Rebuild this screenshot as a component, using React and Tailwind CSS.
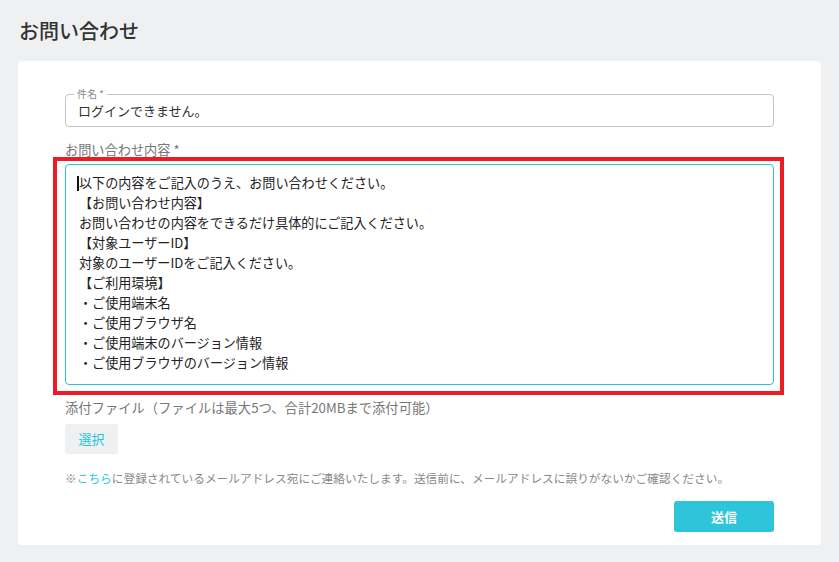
import React from 'react';

const bodyLines = [
  '以下の内容をご記入のうえ、お問い合わせください。',
  '【お問い合わせ内容】',
  'お問い合わせの内容をできるだけ具体的にご記入ください。',
  '【対象ユーザーID】',
  '対象のユーザーIDをご記入ください。',
  '【ご利用環境】',
  '・ご使用端末名',
  '・ご使用ブラウザ名',
  '・ご使用端末のバージョン情報',
  '・ご使用ブラウザのバージョン情報',
];

const App = () => {
  return (
    <div
      className="min-h-[562px] w-full bg-[#eff0f2] px-[18px] pb-[17px] [font-family:'Noto_Sans_CJK_JP','Noto_Sans',sans-serif]"
    >
      <h1 className="pl-[1px] pt-[16px] pb-[16px] text-[20px] leading-[29px] font-medium text-[#333]">
        お問い合わせ
      </h1>

      <div className="rounded-[4px] bg-white px-[47px] pt-[33px] pb-[13px]">
        {/* subject */}
        <div className="relative h-[33px] rounded-[4px] border border-[#c4c4c4]">
          <span className="absolute -top-[8px] left-[8px] bg-white px-[3px] text-[10px] leading-[14px] text-[#888]">
            件名 *
          </span>
          <div className="pl-[12px] pt-[6px] text-[13px] leading-[20px] text-[#333]">
            ログインできません。
          </div>
        </div>

        {/* body */}
        <div className="mt-[13px] text-[13.2px] leading-[20px] text-[#777]">お問い合わせ内容 *</div>
        <div className="relative mt-[4px]">
          <div className="pointer-events-none absolute -top-[7px] -left-[12px] -right-[10px] -bottom-[10px] border-[4px] border-[#ed1c24]" />
          <div className="relative h-[221px] rounded-[4px] border border-[#26c6da] bg-white pl-[13px] pt-[8px] text-[13.1px] leading-[20px] text-[#222]">
            <span className="absolute left-[11px] top-[11px] h-[15px] w-[2px] bg-[#111]" />
            {bodyLines.map((line, i) => (
              <div key={i}>{line}</div>
            ))}
          </div>
        </div>

        {/* attachments */}
        <div className="mt-[13px] text-[13.3px] leading-[20px] text-[#777]">
          添付ファイル（ファイルは最大5つ、合計20MBまで添付可能）
        </div>
        <button className="mt-[6px] flex h-[30px] w-[53px] items-center justify-center rounded-[3px] bg-[#eff0f2] text-[13px] text-[#26c6da]">
          選択
        </button>

        <p className="mt-[15px] text-[11.7px] leading-[18px] text-[#888]">
          ※<span className="text-[#26c6da]">こちら</span>
          に登録されているメールアドレス宛にご連絡いたします。送信前に、メールアドレスに誤りがないかご確認ください。
        </p>

        <div className="mt-[14px] flex justify-end">
          <button className="flex h-[31px] w-[100px] items-center justify-center rounded-[3px] bg-[#2ec5da] text-[13px] font-bold text-white">
            送信
          </button>
        </div>
      </div>
    </div>
  );
};

export default App;
